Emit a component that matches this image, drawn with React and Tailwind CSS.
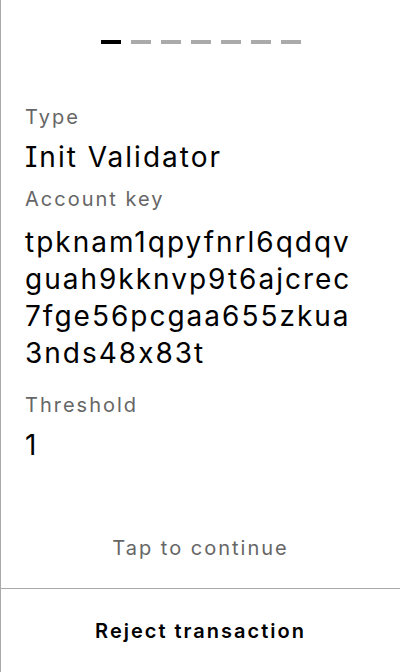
import React from 'react';

const steps = [true, false, false, false, false, false, false];

const Field = ({ label, children, labelGap, bottomGap }) => (
  <div className={bottomGap}>
    <p className={`text-[20px] leading-[28px] text-[#666666] ${labelGap}`}>{label}</p>
    <div className="text-[28px] leading-[37px] text-black">{children}</div>
  </div>
);

export default function App() {
  return (
    <div className="h-[672px] w-[400px] flex flex-col bg-white border-l border-[#aaaaaa] font-['Inter',sans-serif] tracking-[2px] [font-feature-settings:'calt'_0,'cv08'_1]">
      <div className="flex-1 flex flex-col">
        <div className="flex justify-center gap-[10px] pt-10">
          {steps.map((active, i) => (
            <div key={i} className={`w-5 h-1 ${active ? 'bg-black' : 'bg-[#aaaaaa]'}`} />
          ))}
        </div>
        <div className="px-6 mt-[59px]">
          <Field label="Type" labelGap="mb-2" bottomGap="mb-[9px]">Init Validator</Field>
          <Field label="Account key" labelGap="mb-[11px]" bottomGap="mb-[19px]">
            <div className="break-all">
              tpknam1qpyfnrl6qdqv
              <br />
              guah9kknvp9t6ajcrec
              <br />
              7fge56pcgaa655zkua
              <br />
              3nds48x83t
            </div>
          </Field>
          <Field label="Threshold" labelGap="mb-2">1</Field>
        </div>
        <div className="mt-auto pb-[26px] text-center text-[20px] leading-[28px] text-[#666666]">
          Tap to continue
        </div>
      </div>
      <div className="h-[84px] border-t border-[#aaaaaa] flex items-center justify-center">
        <span className="text-[20px] font-semibold text-black">Reject transaction</span>
      </div>
    </div>
  );
}
